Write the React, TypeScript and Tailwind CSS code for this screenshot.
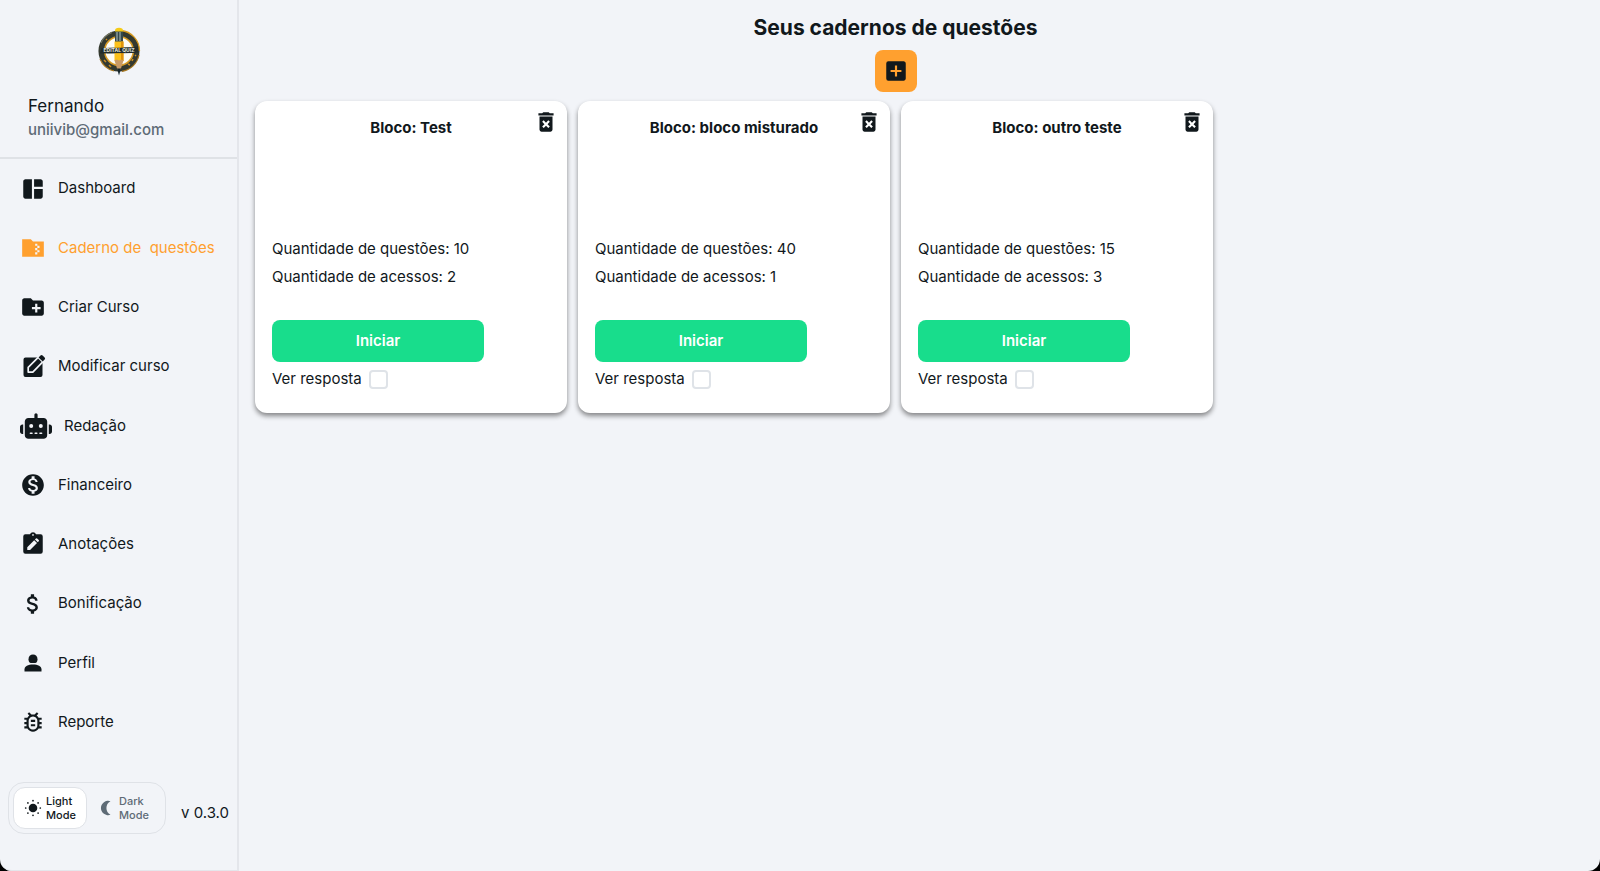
import { FaRobot } from "react-icons/fa6";
import {
  MdAddBox,
  MdAttachMoney,
  MdCreateNewFolder,
  MdDeleteForever,
  MdMonetizationOn,
  MdOutlineBugReport,
  MdSpaceDashboard,
} from "react-icons/md";

const cadernos = [
  { nome: "Test", questoes: 10, acessos: 2 },
  { nome: "bloco misturado", questoes: 40, acessos: 1 },
  { nome: "outro teste", questoes: 15, acessos: 3 },
];

function FolderZipIcon() {
  return (
    <svg viewBox="0 0 24 24" className="size-[26px]" fill="currentColor">
      <path fillRule="evenodd" d="M22 6H12l-2-2H2v16h20V6zM18 12h-2v2h2v2h-2v2h-2v-2h2v-2h-2v-2h2v-2h-2V8h2v2h2v2z" />
    </svg>
  );
}

function EditBoxIcon() {
  return (
    <svg viewBox="0 0 26 26" className="size-[26px]" fill="currentColor">
      <path d="M5.500 3.500h15l2 2V21a2 2 0 0 1-2 2h-15a2 2 0 0 1-2-2V5.500a2 2 0 0 1 2-2z" />
      <path d="M8.200 13.300 18.200 3.300l4.600 4.600-10 10.200H8.200z" stroke="#f2f4f8" strokeWidth="1.700" strokeLinejoin="round" />
      <path d="m17 1.500 3-1.500 5.500 5.500-2 3z" fill="#f2f4f8" />
      <path d="m18.600 3.400 1.900-1.900a1.500 1.500 0 0 1 2.100 0l2 2a1.500 1.500 0 0 1 0 2.100l-1.900 1.900z" />
    </svg>
  );
}

function ClipboardEditIcon() {
  return (
    <svg viewBox="0 0 24 24" className="size-[26px]" fill="currentColor">
      <path
        fillRule="evenodd"
        d="M19 3h-4.200a3 3 0 0 0-5.600 0H5a2 2 0 0 0-2 2v14a2 2 0 0 0 2 2h14a2 2 0 0 0 2-2V5a2 2 0 0 0-2-2zM12 2.800a.8.8 0 1 1 0 1.600.8.8 0 0 1 0-1.600zM9.300 17.500H6.700v-2.600l6.400-6.400 2.600 2.600-6.400 6.400zm8-8-.9.9-2.600-2.600.9-.9a.8.8 0 0 1 1.100 0l1.500 1.500a.8.8 0 0 1 0 1.100z"
      />
    </svg>
  );
}

function PersonIcon() {
  return (
    <svg viewBox="0 0 26 26" className="size-[26px]" fill="currentColor">
      <path d="M13 4.500c2.700 0 4.500 2 4.500 4.700 0 2.300-1 3.800-2.300 3.800h-4.400c-1.300 0-2.300-1.500-2.300-3.800 0-2.700 1.800-4.700 4.500-4.700z" />
      <path d="M4.500 21.500v-2.300c0-2.800 3.600-4.700 8.500-4.700s8.500 1.900 8.500 4.700v2.300z" />
    </svg>
  );
}

const itens = [
  { nome: "Dashboard", icone: <MdSpaceDashboard size={26} /> },
  { nome: "Caderno de \u00a0questões", icone: <FolderZipIcon />, ativo: true },
  { nome: "Criar Curso", icone: <MdCreateNewFolder size={26} /> },
  { nome: "Modificar curso", icone: <EditBoxIcon /> },
  { nome: "Redação", icone: <FaRobot size={32} /> },
  { nome: "Financeiro", icone: <MdMonetizationOn size={26} /> },
  { nome: "Anotações", icone: <ClipboardEditIcon /> },
  { nome: "Bonificação", icone: <MdAttachMoney size={26} /> },
  { nome: "Perfil", icone: <PersonIcon /> },
  { nome: "Reporte", icone: <MdOutlineBugReport size={26} /> },
];

function Logo() {
  return (
    <svg viewBox="0 0 44 50" className="h-[50px] w-11" role="img" aria-label="Edital Quiz">
      <circle cx="22" cy="25" r="14.500" fill="#fdfcf6" stroke="#d79a22" strokeWidth="2" />
      <circle cx="22" cy="25" r="17.800" fill="none" stroke="#34392f" strokeWidth="5.500" />
      <path d="M24 4.500A20.500 20.500 0 0 1 42.500 25" fill="none" stroke="#d89a1e" strokeWidth="1.300" />
      <path d="M42 29A20.500 20.500 0 0 1 25 45.300M3 33a20.500 20.500 0 0 0 14 12" fill="none" stroke="#a9781f" strokeWidth="1.200" />
      <path d="M4 17A19.500 19.500 0 0 1 15 6.500" fill="none" stroke="#757763" strokeWidth="1.200" />
      <path d="M7 34l2 2M12 39l2 2M31 38l2 1M35 35l1-2M38 30l1-1M9 14l1-1" stroke="#d08e22" strokeWidth="1.500" />
      <path d="M4.500 22l32-.8 4.500-1v6.300L36 27l-33 .5z" fill="#222c2c" />
      <path d="M18 4.500a4 2.800 0 0 1 8 0V6h-8z" fill="#f5cb18" />
      <path d="M18 5.500h8V16h-8z" fill="#33474b" />
      <path d="M20 6v9M23 6v9" stroke="#b4c2be" strokeWidth="1" />
      <path d="M17.500 15.500h9V35h-9z" fill="#fbc01a" />
      <path d="M24 15.500h2.500V35H24z" fill="#df920c" />
      <path d="M17.500 34.500l2.200-1 2.300 1 2.300-1 2.200 1L23.500 44h-3z" fill="#c99a66" />
      <path d="M20 42.500h4L22 49.500z" fill="#15242b" />
      <path d="M10 22l24-.5V27l-24 .3z" fill="#222c2c" />
      <text x="22" y="26.300" textAnchor="middle" fill="#e6e8dc" className="font-['Inter',sans-serif] text-[5px] font-bold">
        EDITAL QUIZ
      </text>
    </svg>
  );
}

function Sidebar() {
  return (
    <aside className="flex w-[239px] shrink-0 flex-col rounded-bl-xl border-b border-r-2 border-[#e4e6eb]">
      <div className="border-b-2 border-[#dfe2e6] pb-[17px] pt-[26px]">
        <div className="flex justify-center">
          <Logo />
        </div>
        <div className="mt-4 px-7">
          <p className="text-[17px] leading-7">Fernando</p>
          <p className="text-[15px] font-medium leading-5 text-[#5e6b76]">uniivib@gmail.com</p>
        </div>
      </div>

      <nav className="grid flex-1 auto-rows-fr">
        {itens.map((item) => (
          <a
            key={item.nome}
            href="#"
            aria-current={item.ativo ? "page" : undefined}
            className={`flex items-center gap-3 whitespace-nowrap pl-5 text-[15px] ${item.ativo ? "text-[#ffa02f]" : ""}`}
          >
            {item.icone}
            {item.nome}
          </a>
        ))}
      </nav>

      <div className="flex h-[118px] items-start justify-between px-2 pt-[30px]">
        <div className="flex rounded-2xl border border-[#dfe2e7] p-1">
          <button className="flex h-[42px] w-[74px] items-center gap-1 rounded-xl border border-[#dfe2e7] bg-white pl-2.5 text-left text-[11px] font-medium leading-[14px]">
            <svg viewBox="0 0 18 18" className="size-[18px] shrink-0" fill="currentColor">
              <circle cx="9" cy="9" r="4.300" />
              <path
                d="M9 1.700v.01M9 16.300v.01M1.700 9h.01M16.300 9h.01M3.900 3.900h.01M14.100 3.900h.01M3.900 14.100h.01M14.100 14.100h.01"
                stroke="currentColor"
                strokeWidth="1.700"
                strokeLinecap="round"
              />
            </svg>
            <span>Light Mode</span>
          </button>
          <button className="flex h-[42px] w-[74px] items-center gap-1 pl-2.5 text-left text-[11px] font-medium leading-[14px] text-[#5e6b76]">
            <svg viewBox="0 0 18 18" className="size-[18px] shrink-0" fill="currentColor">
              <path d="M13.500 2.200A7.200 7.200 0 1 0 13.500 15.800 7.700 7.700 0 0 1 13.500 2.200z" />
            </svg>
            <span>Dark Mode</span>
          </button>
        </div>
        <p className="pt-[21px] text-[15px] leading-5">v 0.3.0</p>
      </div>
    </aside>
  );
}

function CadernoCard({ nome, questoes, acessos }: { nome: string; questoes: number; acessos: number }) {
  return (
    <article className="relative flex w-[312px] flex-col rounded-xl bg-white px-[17px] pb-6 pt-[15px] shadow-[0_3px_5px_rgba(0,0,0,0.45)]">
      <button aria-label={`Excluir ${nome}`} className="absolute right-2 top-2">
        <MdDeleteForever size={26} />
      </button>
      <h2 className="text-center text-[15px] font-bold leading-6">Bloco: {nome}</h2>
      <div className="mt-[95px] text-[15px] leading-7">
        <p>Quantidade de questões: {questoes}</p>
        <p>Quantidade de acessos: {acessos}</p>
      </div>
      <button className="mt-[29px] h-[42px] w-[212px] rounded-lg bg-[#18dd8c] text-[15px] font-semibold text-white">
        Iniciar
      </button>
      <label className="mt-[7px] flex items-center gap-[7px] text-[15px] leading-5">
        Ver resposta
        <input type="checkbox" className="size-[19px] appearance-none rounded border-2 border-[#dfe3e8] bg-white" />
      </label>
    </article>
  );
}

export default function App() {
  return (
    <div className="bg-black">
      <div className="flex min-h-screen rounded-b-xl bg-[#f2f4f8] font-['Inter','Liberation_Sans',sans-serif] text-[#11181c]">
        <Sidebar />
        <main className="min-w-0 flex-1 pl-4 pr-16 pt-[14px]">
          <div className="flex flex-col items-center">
            <h1 className="text-[21px] font-bold leading-7">Seus cadernos de questões</h1>
            <button
              aria-label="Novo caderno"
              className="mt-2 flex size-[42px] items-center justify-center rounded-lg bg-[#ffa02f]"
            >
              <MdAddBox size={26} />
            </button>
          </div>
          <div className="mt-[9px] flex flex-wrap gap-[11px]">
            {cadernos.map((c) => (
              <CadernoCard key={c.nome} {...c} />
            ))}
          </div>
        </main>
      </div>
    </div>
  );
}
